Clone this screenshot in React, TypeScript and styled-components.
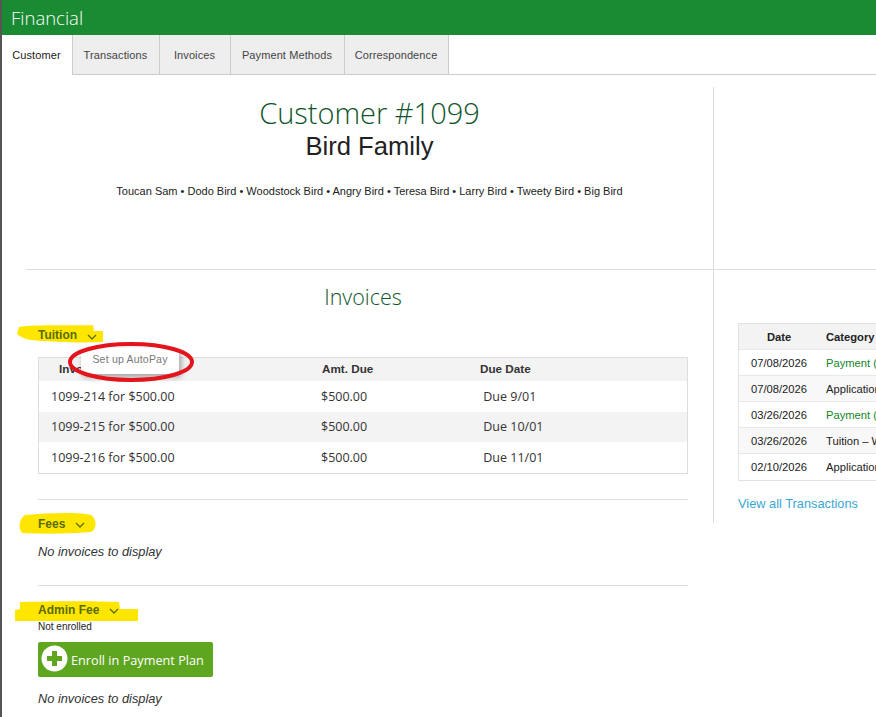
import * as React from "react";
import styled, { createGlobalStyle } from "styled-components";

const GlobalStyle = createGlobalStyle`
  html, body {
    margin: 0;
    padding: 0;
    background: #fff;
    overflow: hidden;
  }
  body {
    font-family: "Liberation Sans", Arial, sans-serif;
    color: #222;
  }
`;

const Page = styled.div`
  width: 876px;
  height: 717px;
  overflow: hidden;
  box-sizing: border-box;
  border-left: 2px solid #555;
`;

const Header = styled.header`
  height: 35px;
  margin-left: -1px;
  background: #1a8a33;
  color: #fff;
  font-family: "Open Sans", sans-serif;
  font-weight: 300;
  font-size: 18.5px;
  line-height: 35px;
  padding-left: 10px;
`;

const TabBar = styled.nav`
  display: flex;
  height: 40px;
  box-sizing: border-box;
  border-bottom: 1px solid #ccc;
`;

const Tab = styled.div<{ $active?: boolean; $w: number }>`
  box-sizing: border-box;
  height: ${(p) => (p.$active ? "40px" : "39px")};
  width: ${(p) => p.$w}px;
  padding-right: 1px;
  text-align: center;
  font-size: 11px;
  line-height: 40px;
  letter-spacing: 0.1px;
  color: ${(p) => (p.$active ? "#222" : "#444")};
  background: ${(p) => (p.$active ? "#fff" : "#eee")};
  border-right: 1px solid #ccc;
`;

const Summary = styled.section`
  display: flex;
  margin: 12px 0 0 24px;
  height: 183px;
  box-sizing: border-box;
  border-bottom: 1px solid #ddd;
`;

const SummaryMain = styled.div`
  width: 688px;
  box-sizing: border-box;
  border-right: 1px solid #ddd;
  text-align: center;
`;

const CustomerTitle = styled.h1`
  margin: 8px 0 0;
  font-family: "Open Sans", sans-serif;
  font-weight: 300;
  font-size: 29px;
  line-height: 36px;
  color: #0f552a;
`;

const FamilyName = styled.h2`
  margin: -1px 0 0;
  font-weight: 400;
  font-size: 25.6px;
  line-height: 32px;
  color: #222;
`;

const Members = styled.p`
  margin: 21px 0 0;
  font-size: 11px;
  line-height: 16px;
  color: #222;
`;

const Columns = styled.div`
  display: flex;
  align-items: flex-start;
`;

const InvoicesColumn = styled.div`
  width: 650px;
  margin-left: 36px;
  flex: none;
`;

const InvoicesTitle = styled.h3`
  margin: 13px 0 0;
  text-align: center;
  font-family: "Open Sans", sans-serif;
  font-weight: 300;
  font-size: 21.5px;
  line-height: 28px;
  color: #0f552a;
`;

const Group = styled.section`
  position: relative;
  & + & {
    margin-top: 25px;
    border-top: 1px solid #ddd;
  }
`;

const GroupHeading = styled.div<{ $top: number }>`
  position: relative;
  display: flex;
  align-items: center;
  gap: 10px;
  height: 16px;
  margin-top: ${(p) => p.$top}px;
  font-size: 12px;
  font-weight: 700;
  color: #5a6b00;
`;

const Highlight = styled.svg<{ $left: number; $top: number }>`
  position: absolute;
  left: ${(p) => p.$left}px;
  top: ${(p) => p.$top}px;
  overflow: visible;
`;

const HeadingLabel = styled.span`
  position: relative;
`;

const Chevron = styled.svg`
  position: relative;
  width: 10px;
  height: 6px;
  margin-top: 3px;
`;

const InvoiceTable = styled.div`
  margin-top: 14px;
  border: 1px solid #ddd;
`;

const InvoiceRow = styled.div<{ $shaded?: boolean; $head?: boolean }>`
  display: grid;
  grid-template-columns: 270px 159px 1fr;
  box-sizing: border-box;
  height: ${(p) => (p.$head ? "23px" : "30.5px")};
  align-items: center;
  padding-left: 12px;
  padding-bottom: ${(p) => (p.$head ? "2px" : "0")};
  background: ${(p) => (p.$shaded ? "#f3f3f3" : "#fff")};
  font-family: ${(p) => (p.$head ? '"Liberation Sans", sans-serif' : '"Open Sans", sans-serif')};
  font-size: ${(p) => (p.$head ? "11.7px" : "12.5px")};
  font-weight: ${(p) => (p.$head ? 700 : 400)};
  color: #333;
`;

const InvoiceHeadFirst = styled.span`
  padding-left: 8px;
`;

const AmountHead = styled.span`
  padding-left: 1px;
`;

const AutoPayMenu = styled.div`
  position: absolute;
  z-index: 2;
  left: 43px;
  top: 21px;
  width: 98px;
  height: 26px;
  box-sizing: border-box;
  padding-top: 5px;
  background: #fff;
  box-shadow: 2px 3px 6px rgba(0, 0, 0, 0.35);
  font-size: 10.5px;
  letter-spacing: 0.2px;
  text-align: center;
  color: #777;
`;

const RedCircle = styled.svg`
  position: absolute;
  z-index: 3;
  left: 30px;
  top: 15px;
  overflow: visible;
`;

const EmptyNote = styled.p<{ $top: number }>`
  margin: ${(p) => p.$top}px 0 0;
  font-size: 12.8px;
  font-style: italic;
  line-height: 16px;
  color: #333;
`;

const NotEnrolled = styled.div`
  margin-top: 3px;
  font-size: 10px;
  line-height: 11px;
  color: #222;
`;

const EnrollButton = styled.button`
  display: flex;
  align-items: center;
  gap: 3px;
  width: 175px;
  height: 35px;
  margin-top: 10px;
  padding: 0 0 0 3px;
  border: 0;
  border-radius: 2px;
  background: #5ea520;
  color: #fff;
  font-family: "Open Sans", sans-serif;
  font-size: 12.7px;
`;

const EnrollLabel = styled.span`
  margin-top: 2px;
`;

const PlusBadge = styled.svg`
  width: 27px;
  height: 27px;
  margin-top: -2px;
`;

const Aside = styled.aside`
  width: 300px;
  height: 253px;
  flex: none;
  margin-left: 25px;
  box-sizing: border-box;
  border-left: 1px solid #ddd;
  padding: 53px 0 0 24px;
`;

const TransactionTable = styled.div`
  border: 1px solid #e2e2e2;
  border-right: 0;
`;

const TransactionRow = styled.div<{ $head?: boolean }>`
  display: grid;
  grid-template-columns: 87px 1fr;
  box-sizing: border-box;
  height: 26px;
  align-items: center;
  white-space: nowrap;
  font-size: 11.2px;
  font-weight: ${(p) => (p.$head ? 700 : 400)};
  color: #222;
  background: ${(p) => (p.$head ? "#f3f3f3" : "#fff")};
  border-bottom: 1px solid #e8e8e8;
  &:nth-child(odd) {
    background: ${(p) => (p.$head ? "#f3f3f3" : "#f8f8f8")};
  }
  &:last-child {
    border-bottom: 0;
  }
`;

const DateCell = styled.span`
  padding-right: 7px;
  text-align: center;
`;

const CategoryCell = styled.span<{ $payment?: boolean }>`
  color: ${(p) => (p.$payment ? "#12851f" : "inherit")};
`;

const ViewAll = styled.a`
  display: block;
  margin-top: 15px;
  font-size: 12.8px;
  color: #3aa7d4;
`;

const tabs = [
  { label: "Customer", w: 71, active: true },
  { label: "Transactions", w: 87 },
  { label: "Invoices", w: 71 },
  { label: "Payment Methods", w: 114 },
  { label: "Correspondence", w: 104 },
];

const invoices = [
  { id: "1099-214 for $500.00", due: "Due 9/01" },
  { id: "1099-215 for $500.00", due: "Due 10/01" },
  { id: "1099-216 for $500.00", due: "Due 11/01" },
];

const transactions = [
  { date: "07/08/2026", category: "Payment (Credit Card)", payment: true },
  { date: "07/08/2026", category: "Application Fee" },
  { date: "03/26/2026", category: "Payment (Credit Card)", payment: true },
  { date: "03/26/2026", category: "Tuition – Weekly" },
  { date: "02/10/2026", category: "Application Fee" },
];

const ChevronIcon = () => (
  <Chevron viewBox="0 0 10 6">
    <path d="M1 1l4 4 4-4" fill="none" stroke="#5a6b00" strokeWidth="1.3" />
  </Chevron>
);

type MarkerProps = { left: number; top: number; width: number; height: number; d: string };

const Marker = ({ left, top, width, height, d }: MarkerProps) => (
  <Highlight $left={left} $top={top} width={width} height={height} viewBox={`0 0 ${width} ${height}`}>
    <path d={d} fill="#ffe600" />
  </Highlight>
);

export default function App() {
  return (
    <Page>
      <GlobalStyle />
      <Header>Financial</Header>
      <TabBar>
        {tabs.map((t) => (
          <Tab key={t.label} $active={t.active} $w={t.w}>
            {t.label}
          </Tab>
        ))}
      </TabBar>
      <Summary>
        <SummaryMain>
          <CustomerTitle>Customer #1099</CustomerTitle>
          <FamilyName>Bird Family</FamilyName>
          <Members>
            Toucan Sam • Dodo Bird • Woodstock Bird • Angry Bird • Teresa Bird • Larry Bird • Tweety
            Bird • Big Bird
          </Members>
        </SummaryMain>
      </Summary>
      <Columns>
        <InvoicesColumn>
          <InvoicesTitle>Invoices</InvoicesTitle>
          <Group>
            <GroupHeading $top={16}>
              <Marker
                left={-21}
                top={-2}
                width={86}
                height={18}
                d="M2 2 C20 -1 60 1 76 0 L77 6 L86 6 L86 17 C60 18 40 17 28 16 C14 16 6 14 0 9 Z"
              />
              <HeadingLabel>Tuition</HeadingLabel>
              <ChevronIcon />
            </GroupHeading>
            <InvoiceTable>
              <InvoiceRow $head $shaded>
                <InvoiceHeadFirst>Invoice</InvoiceHeadFirst>
                <AmountHead>Amt. Due</AmountHead>
                <span>Due Date</span>
              </InvoiceRow>
              {invoices.map((inv, i) => (
                <InvoiceRow key={inv.id} $shaded={i === 1}>
                  <span>{inv.id}</span>
                  <span>$500.00</span>
                  <span>&nbsp;{inv.due}</span>
                </InvoiceRow>
              ))}
            </InvoiceTable>
            <AutoPayMenu>Set up AutoPay</AutoPayMenu>
            <RedCircle width={126} height={40} viewBox="0 0 126 40">
              <ellipse cx="63" cy="20" rx="61" ry="18" fill="none" stroke="#e3141c" strokeWidth="4" />
            </RedCircle>
          </Group>
          <Group>
            <GroupHeading $top={16}>
              <Marker
                left={-19}
                top={-3}
                width={77}
                height={21}
                d="M6 2 C30 0 60 -1 72 2 C78 6 78 17 72 19 C50 21 20 21 3 20 C-1 15 0 6 6 2 Z"
              />
              <HeadingLabel>Fees</HeadingLabel>
              <ChevronIcon />
            </GroupHeading>
            <EmptyNote $top={12}>No invoices to display</EmptyNote>
          </Group>
          <Group>
            <GroupHeading $top={16}>
              <Marker
                left={-23}
                top={-1}
                width={123}
                height={21}
                d="M5 1 C40 0 80 0 104 1 L105 8 L123 8 L123 20 L60 20 L0 20 L0 9 L5 8 Z"
              />
              <HeadingLabel>Admin Fee</HeadingLabel>
              <ChevronIcon />
            </GroupHeading>
            <NotEnrolled>Not enrolled</NotEnrolled>
            <EnrollButton>
              <PlusBadge viewBox="0 0 27 27">
                <circle cx="13.5" cy="13.5" r="13" fill="#fff" />
                <path d="M11 6h5v5h5v5h-5v5h-5v-5H6v-5h5z" fill="#5ea520" />
              </PlusBadge>
              <EnrollLabel>Enroll in Payment Plan</EnrollLabel>
            </EnrollButton>
            <EmptyNote $top={14}>No invoices to display</EmptyNote>
          </Group>
        </InvoicesColumn>
        <Aside>
          <TransactionTable>
            <TransactionRow $head>
              <DateCell>Date</DateCell>
              <span>Category</span>
            </TransactionRow>
            {transactions.map((t, i) => (
              <TransactionRow key={i}>
                <DateCell>{t.date}</DateCell>
                <CategoryCell $payment={t.payment}>{t.category}</CategoryCell>
              </TransactionRow>
            ))}
          </TransactionTable>
          <ViewAll>View all Transactions</ViewAll>
        </Aside>
      </Columns>
    </Page>
  );
}
